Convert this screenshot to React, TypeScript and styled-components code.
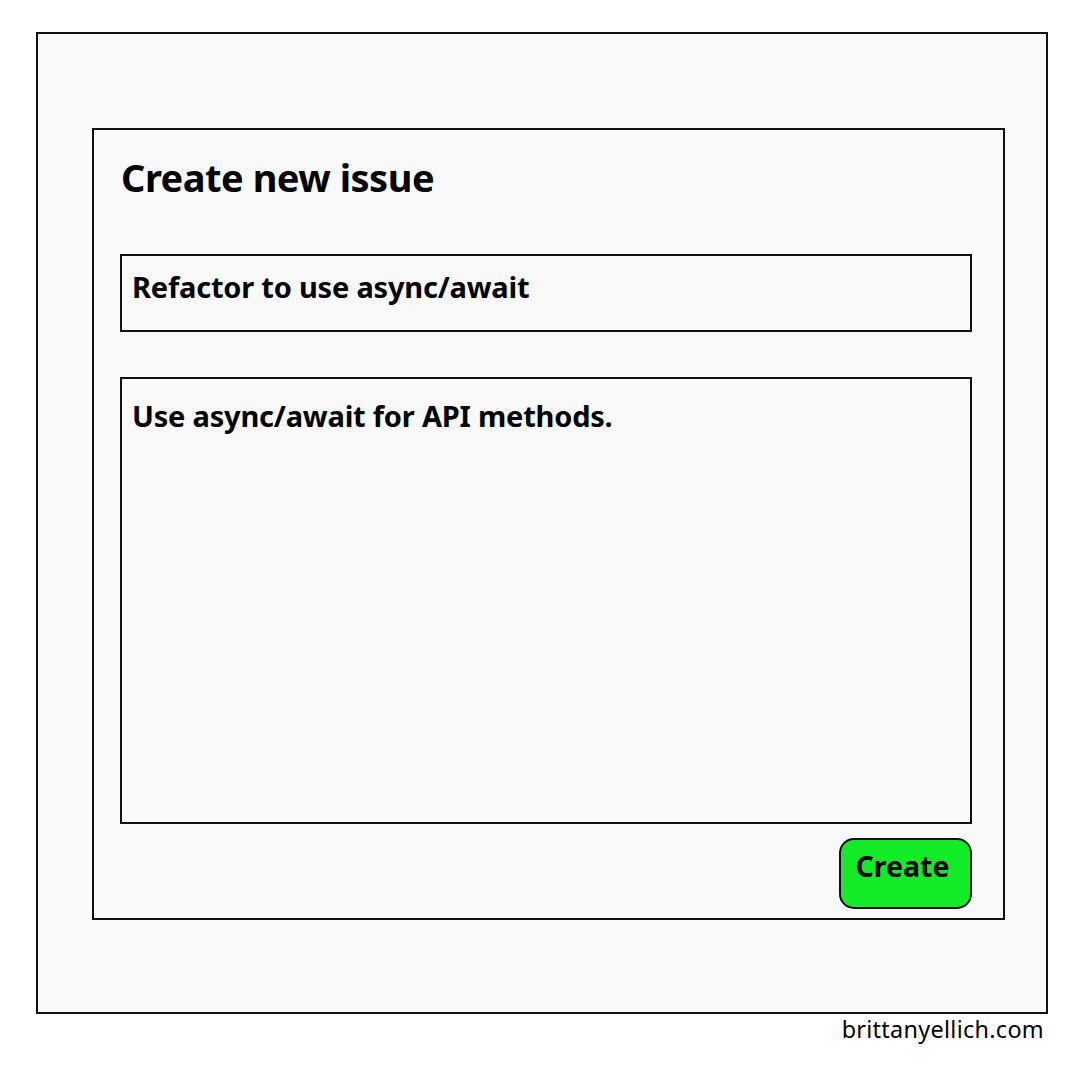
import React from "react";
import styled, { createGlobalStyle } from "styled-components";

const Global = createGlobalStyle`
  html, body { margin: 0; padding: 0; background: #ffffff; }
  body { font-family: "Comic Sans MS", "Noto Sans", "DejaVu Sans", sans-serif; color: #000; }
`;

const Page = styled.div`
  width: 1080px;
  height: 1080px;
  padding: 32px 0 0 36px;
  box-sizing: border-box;
  display: flex;
  flex-direction: column;
`;

const Frame = styled.div`
  width: 1012px;
  height: 982px;
  box-sizing: border-box;
  border: 2px solid #111;
  background: #f9f9f9;
  padding: 94px 0 0 54px;
`;

const Card = styled.div`
  width: 913px;
  height: 792px;
  box-sizing: border-box;
  border: 2px solid #111;
  background: #f9f9f9;
  padding: 21px 31px 0 26px;
  display: flex;
  flex-direction: column;
`;

const Title = styled.h1`
  margin: 0 0 0 1px;
  font-size: 38px;
  line-height: 52px;
  font-weight: 700;
  letter-spacing: -0.5px;
`;

const Field = styled.div<{ $h: number; $top: number; $multi?: boolean }>`
  margin-top: ${(p) => p.$top}px;
  height: ${(p) => p.$h}px;
  width: 852px;
  box-sizing: border-box;
  border: 2px solid #111;
  background: #f9f9f9;
  padding: ${(p) => (p.$multi ? "17px 10px 0" : "0 10px 14px")};
  font-size: 29px;
  font-weight: 700;
  letter-spacing: -0.2px;
  display: flex;
  align-items: ${(p) => (p.$multi ? "flex-start" : "center")};
`;

const Actions = styled.div`
  width: 852px;
  display: flex;
  justify-content: flex-end;
  margin-top: 14px;
`;

const Button = styled.button`
  width: 133px;
  height: 71px;
  box-sizing: border-box;
  border: 2px solid #111;
  border-radius: 15px;
  background: #12ec27;
  font-family: inherit;
  font-size: 28.5px;
  font-weight: 700;
  color: #000;
  padding: 0 6px 16px 0;
  cursor: pointer;
`;

const Footer = styled.div`
  width: 1008px;
  text-align: right;
  font-size: 23.4px;
  line-height: 30px;
  margin-top: 0;
  letter-spacing: 0.3px;
`;

export default function App() {
  return (
    <>
      <Global />
      <Page>
        <Frame>
          <Card>
            <Title>Create new issue</Title>
            <Field $h={78} $top={51}>Refactor to use async/await</Field>
            <Field $h={447} $top={45} $multi>
              Use async/await for API methods.
            </Field>
            <Actions>
              <Button>Create</Button>
            </Actions>
          </Card>
        </Frame>
        <Footer>brittanyellich.com</Footer>
      </Page>
    </>
  );
}
